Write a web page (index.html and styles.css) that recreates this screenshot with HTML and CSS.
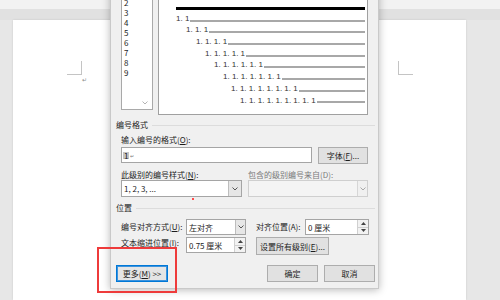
FILE: index.html
```html
<!DOCTYPE html>
<html lang="zh-CN">
<head>
  <meta charset="UTF-8" />
  <title>定义新多级列表</title>
  <link rel="stylesheet" href="styles.css">
</head>
<body>

<div class="word">
  <div class="ruler"></div>
  <div class="canvas">
    <div class="page">
      <div class="corner">
        <div class="mark mark-l"></div>
        <span class="para">↵</span>
      </div>
      <div class="mark mark-r"></div>
    </div>
  </div>
</div>

<div class="dialog">
  <div class="top-row">
    <ul class="levels">
      <li>1</li><li>2</li><li>3</li><li>4</li><li>5</li><li>6</li><li>7</li><li>8</li><li>9</li>
      <svg class="scroll-down" width="6" height="4" viewBox="0 0 6 4"><path d="M0.5 0.5 L3 3 L5.5 0.5" fill="none" stroke="#b4b4b4"/></svg>
    </ul>
    <div class="preview">
      <div class="pv-row"><span class="pv-line thick"></span></div>
      <div class="pv-row lv1">1. 1<span class="pv-line"></span></div>
      <div class="pv-row lv2">1. 1. 1<span class="pv-line"></span></div>
      <div class="pv-row lv3">1. 1. 1. 1<span class="pv-line"></span></div>
      <div class="pv-row lv4">1. 1. 1. 1. 1<span class="pv-line"></span></div>
      <div class="pv-row lv5">1. 1. 1. 1. 1. 1<span class="pv-line"></span></div>
      <div class="pv-row lv6">1. 1. 1. 1. 1. 1. 1<span class="pv-line"></span></div>
      <div class="pv-row lv7">1. 1. 1. 1. 1. 1. 1. 1<span class="pv-line"></span></div>
      <div class="pv-row lv8">1. 1. 1. 1. 1. 1. 1. 1. 1<span class="pv-line"></span></div>
    </div>
  </div>

  <div class="group-title"><span>编号格式</span><i></i></div>
  <div class="group">
    <div class="label">输入编号的格式(<u>O</u>):</div>
    <div class="format-row">
      <div class="textbox"><span class="field">1</span><span class="ret">↵</span></div>
      <button class="btn btn-font">字体(<u>F</u>)...</button>
    </div>
    <div class="two-col">
      <div class="label">此级别的编号样式(<u>N</u>):</div>
      <div class="label disabled">包含的级别编号来自(D):</div>
      <div class="combo combo-num">
        <span class="combo-text">1, 2, 3, ...</span>
        <span class="arrow"><svg width="6" height="4" viewBox="0 0 6 4"><path d="M0.5 0.5 L3 3 L5.5 0.5" fill="none" stroke="#555"/></svg></span>
      </div>
      <div class="combo disabled">
        <span class="combo-text"></span>
        <span class="arrow"><svg width="6" height="4" viewBox="0 0 6 4"><path d="M0.5 0.5 L3 3 L5.5 0.5" fill="none" stroke="#a8a8a8"/></svg></span>
      </div>
    </div>
  </div>

  <div class="group-title pos-title"><span>位置</span><i></i></div>
  <div class="group">
    <div class="pos-grid">
      <div class="label mid cell-a1">编号对齐方式(<u>U</u>):</div>
      <div class="combo cell-a2">
        <span class="combo-text">左对齐</span>
        <span class="arrow"><svg width="6" height="4" viewBox="0 0 6 4"><path d="M0.5 0.5 L3 3 L5.5 0.5" fill="none" stroke="#555"/></svg></span>
      </div>
      <div class="label mid cell-a4">对齐位置(A):</div>
      <div class="spin cell-a5">
        <span class="combo-text">0 厘米</span>
        <span class="spin-btns">
          <span><svg width="5" height="3" viewBox="0 0 5 3"><path d="M0 3 L2.5 0 L5 3z" fill="#444"/></svg></span>
          <span><svg width="5" height="3" viewBox="0 0 5 3"><path d="M0 0 L2.5 3 L5 0z" fill="#444"/></svg></span>
        </span>
      </div>

      <div class="label cell-b1">文本缩进位置(<u>I</u>):</div>
      <div class="spin cell-b2">
        <span class="combo-text">0.75 厘米</span>
        <span class="spin-btns">
          <span><svg width="5" height="3" viewBox="0 0 5 3"><path d="M0 3 L2.5 0 L5 3z" fill="#444"/></svg></span>
          <span><svg width="5" height="3" viewBox="0 0 5 3"><path d="M0 0 L2.5 3 L5 0z" fill="#444"/></svg></span>
        </span>
      </div>
      <button class="btn btn-all cell-b4">设置所有级别(<u>E</u>)...</button>
    </div>
  </div>

  <div class="bottom-row">
    <button class="btn btn-more">更多(<u>M</u>) &gt;&gt;</button>
    <button class="btn btn-ok">确定</button>
    <button class="btn btn-ok">取消</button>
  </div>
</div>

<div class="red-dot"></div>
<div class="highlight"></div>

</body>
</html>
```

FILE: styles.css
```css
* { box-sizing: border-box; }

body {
  margin: 0;
  width: 500px;
  height: 300px;
  overflow: hidden;
  position: relative;
  font-family: "Noto Sans CJK SC", "Noto Sans", sans-serif;
  font-size: 8px;
  color: #1c1c1c;
  background: #e6e6e6;
}

/* word window behind the dialog */
.word { display: flex; flex-direction: column; height: 300px; }
.ruler { height: 9px; background: #f2f2f2; }
.canvas {
  flex: 1;
  display: flex;
  padding: 11px 0 0 13px;
  background: linear-gradient(#e1e1e1 11px, #e7e7e7 11px);
}
.page {
  width: 453px;
  background: #fff;
  display: flex;
  justify-content: space-between;
  align-items: flex-start;
  padding: 41px 53px 0 54px;
  box-shadow: 0 0 2px rgba(0,0,0,0.12);
}
.corner { display: flex; flex-direction: column; }
.mark { width: 15px; height: 14px; border-bottom: 1px solid #c4c4c4; }
.mark-l { border-right: 1px solid #c4c4c4; }
.mark-r { border-left: 1px solid #c4c4c4; }
.para { font-size: 6px; line-height: 6px; color: #8a8a8a; margin: 2px 0 0 15px; }

/* dialog */
.dialog {
  position: absolute;
  left: 110px;
  top: -14px;
  width: 269px;
  height: 303px;
  background: #f0f0f0;
  border: 1px solid #c9c9c9;
  box-shadow: 0 1px 8px rgba(0,0,0,0.28);
  padding: 0 3px 0 5px;
  display: flex;
  flex-direction: column;
}

.top-row { display: flex; align-items: flex-start; gap: 5px; margin-left: 5px; }
.levels {
  list-style: none;
  margin: 0;
  padding: 0 0 0 2px;
  width: 32px;
  height: 123px;
  background: #fff;
  border: 1px solid #a9a9a9;
  position: relative;
  overflow: hidden;
}
.levels li { height: 10px; line-height: 10px; }
.scroll-down { position: absolute; right: 4px; bottom: 4px; }

.preview {
  width: 210px;
  height: 128px;
  background: #fff;
  border: 1px solid #a0a0a0;
  padding: 13px 2px 0 17px;
  font-family: "Liberation Sans", sans-serif;
  color: #333;
}
.pv-row { display: flex; align-items: center; height: 11.7px; line-height: 11.7px; white-space: nowrap; }
.pv-line { flex: 1; height: 2px; margin: 4px 0 0 1px; background: #a8a8a8; }
.pv-line.thick { height: 3px; margin-left: 0; background: #000; }
.lv2 { padding-left: 10px; }
.lv3 { padding-left: 20px; }
.lv4 { padding-left: 29px; }
.lv5 { padding-left: 38px; }
.lv6 { padding-left: 47px; }
.lv7 { padding-left: 55px; }
.lv8 { padding-left: 64px; }

.group-title { display: flex; align-items: center; line-height: 12px; margin-top: 4px; }
.group-title i { flex: 1; height: 1px; background: #dcdcdc; margin-left: 4px; }
.pos-title { margin-top: 5px; }
.group { padding-left: 5px; }

.label { line-height: 12px; margin-top: 3px; white-space: nowrap; }
.label.disabled { color: #7a7a7a; }
.label.mid { margin-top: 0; align-self: center; }

.format-row { display: flex; gap: 6px; margin-top: 1px; align-items: flex-start; }
.textbox {
  width: 191px;
  height: 16px;
  background: #fff;
  border: 1px solid #a5a5a5;
  display: flex;
  align-items: center;
  padding-left: 1px;
}
.field { background: #c4c4c4; line-height: 7px; padding: 0 1px; }
.ret { font-size: 5px; color: #777; margin-left: 1px; }

.btn {
  font: inherit;
  color: inherit;
  background: #e1e1e1;
  border: 1px solid #adadad;
  height: 17px;
  padding: 0;
  display: flex;
  align-items: center;
  justify-content: center;
  white-space: nowrap;
}
.btn-font { width: 50px; }

.two-col {
  display: grid;
  grid-template-columns: 121px 120px;
  column-gap: 6px;
  margin-top: 2px;
}
.two-col .label { line-height: 11px; }

.combo, .spin {
  height: 17px;
  background: #fff;
  border: 1px solid #a5a5a5;
  display: flex;
  align-items: center;
}
.combo-text { flex: 1; padding-left: 2px; white-space: nowrap; }
.arrow {
  width: 10px;
  height: 100%;
  background: #e6e6e6;
  border-left: 1px solid #bdbdbd;
  display: flex;
  align-items: center;
  justify-content: center;
}
.combo-num .arrow { width: 13px; }
.combo.disabled { background: #f4f4f4; border-color: #cfcfcf; }
.combo.disabled .arrow { background: #f0f0f0; border-left-color: #d6d6d6; }

.spin-btns {
  width: 11px;
  height: 100%;
  display: flex;
  flex-direction: column;
  border-left: 1px solid #d0d0d0;
}
.spin-btns span {
  flex: 1;
  display: flex;
  align-items: center;
  justify-content: center;
  background: #f2f2f2;
}
.spin-btns span + span { border-top: 1px solid #d0d0d0; }

.pos-grid {
  display: grid;
  grid-template-columns: 65px 60px 10px 49px 64px;
  grid-template-rows: 16px 18px;
  row-gap: 2px;
  margin-top: 5px;
}
.pos-grid .combo, .pos-grid .spin { height: 16px; }
.cell-a1 { grid-area: 1 / 1; }
.cell-a2 { grid-area: 1 / 2; }
.cell-a4 { grid-area: 1 / 4; }
.cell-a5 { grid-area: 1 / 5; }
.cell-b1 { grid-area: 2 / 1; margin-top: 0; }
.cell-b2 { grid-area: 2 / 2; height: 15px; }
.cell-b4 { grid-area: 2 / 4 / 3 / 6; }
.btn-all { justify-self: start; width: 73px; height: 18px; }

.bottom-row { display: flex; gap: 6px; margin-top: 10px; }
.btn-more {
  width: 52px;
  margin-right: auto;
  background: #e5e5e5;
  border-color: #0078d7;
  box-shadow: inset 0 0 0 1px #3d93dd;
}
.btn-ok { width: 51px; }

/* annotations over the screenshot */
.highlight {
  position: absolute;
  left: 97px;
  top: 247px;
  width: 80px;
  height: 46px;
  border: 2px solid #ee3b3b;
}
.red-dot {
  position: absolute;
  left: 192px;
  top: 198px;
  width: 2px;
  height: 2px;
  background: #ff4b4b;
}
```
